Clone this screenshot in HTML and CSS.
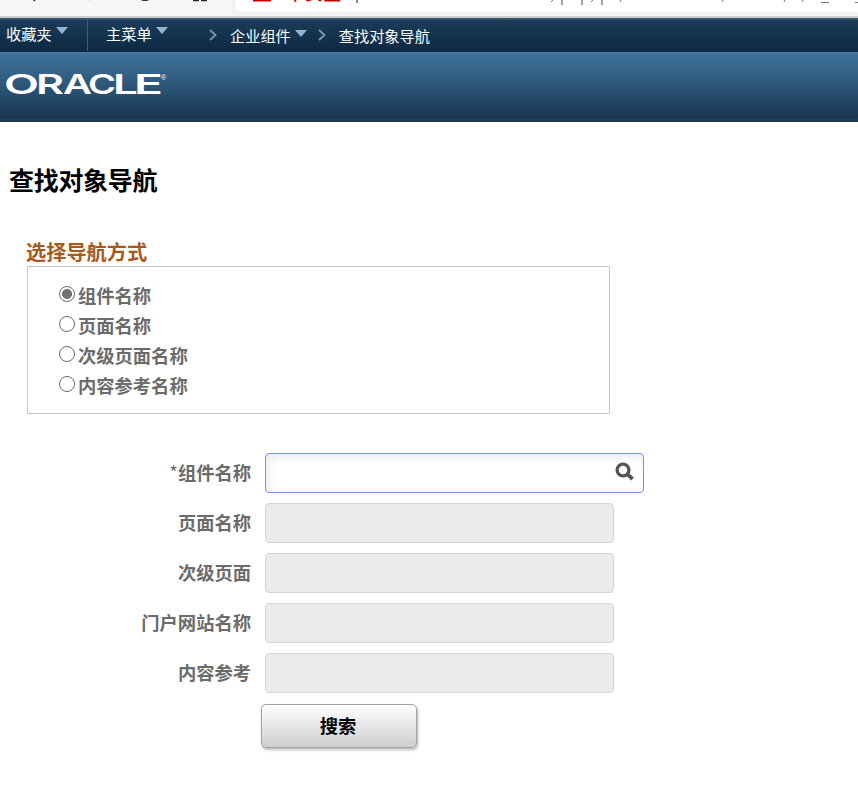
FILE: index.html
```html
<!DOCTYPE html>
<html lang="zh-CN">
<head>
<meta charset="utf-8">
<title>查找对象导航</title>
<link rel="stylesheet" href="styles.css">
</head>
<body>
<div class="chrome">
  <svg class="chrome-icons" width="235" height="12" viewBox="0 0 235 12" fill="none">
    <path d="M33 -1l2 2" stroke="#222" stroke-width="1.500"/>
    <path d="M90 -1v2" stroke="#ccc"/>
    <path d="M138 -4a7.500 6.500 0 0 0 14 0" stroke="#222" stroke-width="1.600"/>
    <path d="M193 .5h6M201 .5h6" stroke="#222" stroke-width="1.600"/>
  </svg>
  <div class="address">
    <svg width="623" height="12" viewBox="235 0 623 12" fill="none">
      <path d="M253 0h18v1.500h-18z" fill="#c00"/>
      <path d="M357 0v3" stroke="#888" stroke-width="2"/>
      <path d="M553 0l-2 2M593 0l-2 2M621 0l-1 2M723 0l-1 2M785 0l-1 2M803 0l-1 2" stroke="#777"/>
      <path d="M562 0v5M582 0v5M602 0v5" stroke="#888" stroke-width="1.500"/>
      <path d="M821 2.500h8M855 2.500h3" stroke="#777"/>
    </svg>
    <span class="insecure">不安全</span>
  </div>
</div>
<nav class="nav">
  <a class="item fav">收藏夹<i class="caret"></i></a>
  <a class="item menu">主菜单<i class="caret"></i></a>
  <svg class="chev c1" width="8" height="12" viewBox="0 0 8 12"><path d="M1 1l5.500 5L1 11"/></svg>
  <a class="item crumb">企业组件<i class="caret"></i></a>
  <svg class="chev c2" width="8" height="12" viewBox="0 0 8 12"><path d="M1 1l5.500 5L1 11"/></svg>
  <a class="item crumb">查找对象导航</a>
</nav>
<header class="banner">
  <svg class="logo" width="170" height="34" viewBox="0 0 170 34" role="img" aria-label="ORACLE">
    <g class="logo-text">
      <text x="4" y="27" textLength="35" lengthAdjust="spacingAndGlyphs">O</text>
      <text x="36" y="27" textLength="28" lengthAdjust="spacingAndGlyphs">R</text>
      <text x="63" y="27" textLength="29" lengthAdjust="spacingAndGlyphs">A</text>
      <text x="88" y="27" textLength="28" lengthAdjust="spacingAndGlyphs">C</text>
      <text x="113" y="27" textLength="25" lengthAdjust="spacingAndGlyphs">L</text>
      <text x="134" y="27" textLength="29" lengthAdjust="spacingAndGlyphs">E</text>
    </g>
    <text class="logo-reg" x="161" y="13">®</text>
  </svg>
</header>
<main>
  <h1>查找对象导航</h1>
  <h2>选择导航方式</h2>
  <div class="options">
    <label><span class="radio on"></span><span class="name">组件名称</span></label>
    <label><span class="radio"></span><span class="name">页面名称</span></label>
    <label><span class="radio"></span><span class="name">次级页面名称</span></label>
    <label><span class="radio"></span><span class="name">内容参考名称</span></label>
  </div>
  <form class="fields">
    <label><span class="star">*</span>组件名称</label>
    <div class="input active">
      <svg width="20" height="20" viewBox="0 0 20 20" fill="none" stroke="#555"><circle cx="8" cy="8" r="5.900" stroke-width="3.300"/><path d="M12.300 12.200l5.300 4.800" stroke-width="3.800"/></svg>
    </div>
    <label>页面名称</label><div class="input"></div>
    <label>次级页面</label><div class="input"></div>
    <label>门户网站名称</label><div class="input"></div>
    <label>内容参考</label><div class="input"></div>
  </form>
  <button class="search" type="button">搜索</button>
</main>
</body>
</html>
```
FILE: styles.css
```css
* { box-sizing: border-box; }
body { margin: 0; width: 858px; height: 786px; overflow: hidden; background: #fff; font-family: "Noto Sans CJK SC", sans-serif; color: #000; }
.chrome { height: 18px; display: flex; align-items: flex-start; background: #f6f6f6; border-bottom: 2px solid #ccc; overflow: hidden; }
.chrome-icons { flex: none; }
.address { position: relative; flex: none; width: 623px; height: 12px; background: #fff; border-bottom-left-radius: 5px; overflow: hidden; box-shadow: 0 0 6px #e4e4e4; }
.address svg { display: block; }
.insecure { position: absolute; left: 51px; top: -18px; font-size: 18.500px; line-height: 20px; color: #c00; font-weight: 500; }
.nav { height: 34px; display: flex; align-items: flex-start; background: linear-gradient(#3d5c75 0, #1a3b57 3px, #0d2943 100%); color: #fff; }
.item { display: flex; font-size: 15.200px; line-height: 22px; white-space: nowrap; }
.fav { width: 88px; height: 33px; padding: 4px 0 0 6px; border-right: 1px solid #3a5f7e; }
.menu { width: 121px; padding: 4px 0 0 18px; }
.crumb { padding-top: 6px; }
.caret { width: 0; height: 0; margin: 5px 0 0 4px; border: 6px solid transparent; border-top: 7px solid #91b5d1; border-bottom: 0; }
.crumb .caret { margin-top: 6px; }
.chev { flex: none; fill: none; stroke: #7899b3; stroke-width: 1.800; margin-top: 11px; }
.c1 { margin-right: 13px; }
.c2 { margin: 11px 13px 0 11px; }
.banner { height: 70px; padding-top: 15px; background: linear-gradient(#55819f 0, #3e7098 2px, #386990 14px, #1a3652 66px, #234059 67px, #1a334c 100%); }
.logo { display: block; }
.logo-text { font: 600 27.500px Inter, sans-serif; fill: #fff; }
.logo-reg { font: 7px "Liberation Sans", sans-serif; fill: #fff; }
h1 { margin: 39px 0 0 9px; font-size: 25px; line-height: 36px; font-weight: 700; letter-spacing: -.3px; }
h2 { margin: 40px 0 0 26px; font-size: 20.200px; line-height: 29px; font-weight: 700; color: #a75a1d; }
.options { width: 583px; height: 148px; margin-left: 27px; padding: 14px 0 0 31px; border: 1px solid #c8c8c8; }
.options label { display: flex; align-items: center; height: 30px; font-size: 18.300px; font-weight: 700; color: #6b6b6b; }
.name { line-height: 26px; margin-top: -2px; }
.radio { flex: none; width: 16px; height: 16px; margin: -4px 3px 0 0; border: 1px solid #6b6b6b; border-radius: 50%; background: #fff; }
.radio.on { background: radial-gradient(circle, #737373 0, #737373 4.700px, #fff 5.300px); }
.fields { display: grid; grid-template-columns: 251px 379px; column-gap: 14px; row-gap: 10px; margin-top: 39px; }
.fields label { text-align: right; line-height: 38px; height: 40px; font-size: 18.300px; font-weight: 700; color: #6b6b6b; }
.star { font-weight: 400; }
.input { width: 349px; height: 40px; border: 1px solid #d5d5d5; border-radius: 4px; background: #ebebeb; }
.input.active { width: 379px; display: flex; justify-content: flex-end; padding: 8px 8px 0 0; border-color: #7a92db; background: #fff; box-shadow: inset 3px 4px 8px #ececec; }
.search { display: block; width: 156px; height: 44px; margin: 11px 0 0 261px; padding: 0 2px 2px 0; border: 1px solid #a0a0a0; border-radius: 5px; background: linear-gradient(#fff, #e7e7e7 50%, #cecece); box-shadow: 1px 2px 3px #bbb; font: 700 18.300px "Noto Sans CJK SC", sans-serif; color: #000; }
```
